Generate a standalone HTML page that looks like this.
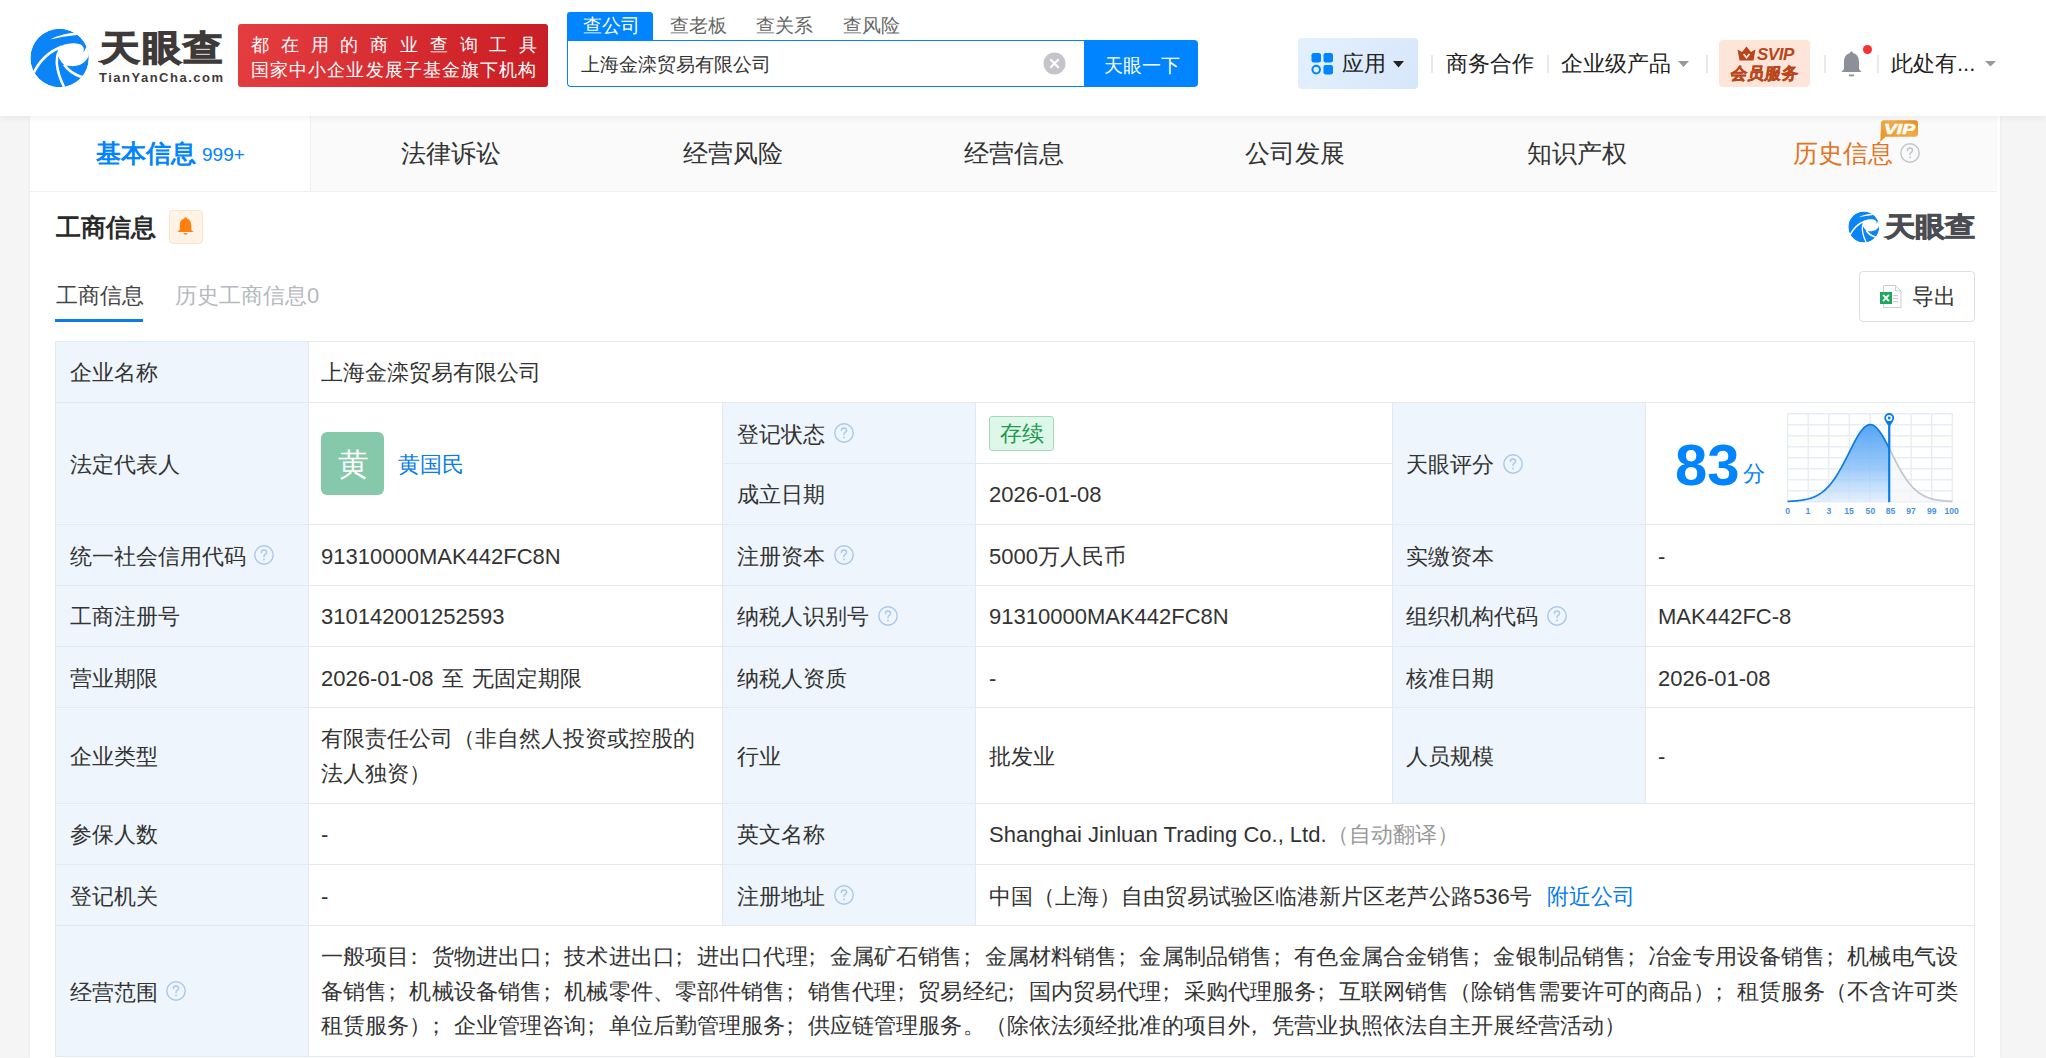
<!DOCTYPE html>
<html><head><meta charset="utf-8">
<style>
*{box-sizing:border-box;margin:0;padding:0}
html,body{width:2046px;height:1058px;overflow:hidden;background:#f5f5f5;font-family:"Liberation Sans",sans-serif;color:#333}
.abs{position:absolute}
.t{position:absolute;white-space:nowrap;line-height:1}
.c{}
.pl{position:relative;left:-.3em}
.pr{position:relative;left:.22em}
.pl2{position:relative;left:-.22em}
#hdr{position:absolute;left:0;top:0;width:2046px;height:116px;background:#fff;box-shadow:0 2px 7px rgba(0,0,0,.06);z-index:2}
.ln{position:absolute;background:#e3eaf2}
.lb{position:absolute;background:#eef5fc}
</style></head><body>

<div id="hdr">
<svg viewBox="0 0 68 68" width="68" height="68" style="position:absolute;left:26px;top:24px">
<defs><clipPath id="cca"><circle cx="33.6" cy="34" r="29.2"/></clipPath></defs>
<g clip-path="url(#cca)">
<circle cx="33.6" cy="34" r="29.2" fill="#0a84f6"/>
<path d="M34.7 22.2 C37 21 39 20.2 41.1 19.9 C44 19.4 46.5 19.2 48.8 19.3 C51 19.5 53 20 54.6 20.6 C56.3 21.6 57.5 22.8 57.8 24.4 C58.1 26 57.6 27.5 56.9 28.6 C58.3 27.2 59.6 25 60.6 22 L68 18 L68 36 L62.9 31.3 C61.5 35 59 38 55.9 39.8 C53.5 41.2 51 41.9 48.8 42.1 C46 42.3 44 42.1 41.8 41.8 C40.5 41.6 39.5 41.4 38.6 41.1 C36.5 39.5 34.5 37 33.4 34.7 C32.6 33 32 31.5 31.8 30 C32.2 27 33.2 24 34.7 22.2 Z" fill="#fff"/>
<path d="M7.2 50 C13 37.5 23 27.5 36.2 22.6" stroke="#fff" stroke-width="2.7" fill="none"/>
<path d="M35.2 23 C31.2 29 30.3 35 31 41 C31.8 48 34.5 56 38.3 63.5" stroke="#fff" stroke-width="2.5" fill="none"/>
<path d="M38.2 40.6 C41.5 46 47.5 50.5 56.5 53.3" stroke="#fff" stroke-width="2.8" fill="none"/>
<path d="M24 15.6 Q35.5 9.4 51 8.6 L51 11.1 Q37 12.4 24 15.6Z" fill="#fff"/>
</g></svg>
<div class="t" style="left:100px;top:25px;font-size:41px;font-weight:bold;color:#3f3a3a;-webkit-text-stroke:1.4px #3f3a3a;letter-spacing:1.5px;transform:scale(0.98,0.86);transform-origin:0 100%">天眼查</div>
<div class="t" style="left:99px;top:71px;font-size:13px;font-weight:bold;color:#3f3a3a;letter-spacing:1.5px">TianYanCha.com</div>
<div class="abs" style="left:238px;top:24px;width:310px;height:63px;border-radius:3px;background:linear-gradient(100deg,#e43d40 0%,#d42a2f 60%,#c71d24 100%)"></div>
<div class="t" style="left:251px;top:36px;font-size:18px;color:#fff;letter-spacing:11.8px">都在用的商业查询工具</div>
<div class="t" style="left:251px;top:61px;font-size:18px;color:#fff;letter-spacing:1.1px">国家中小企业发展子基金旗下机构</div>
<div class="abs" style="left:567px;top:12px;width:86px;height:29px;border-radius:3px 3px 0 0;background:#0084ff"></div>
<div class="t" style="left:583px;top:17px;font-size:18.5px;color:#fff;"><span class="c">查公司</span></div>
<div class="t" style="left:670px;top:17px;font-size:18.5px;color:#666;"><span class="c">查老板</span></div>
<div class="t" style="left:756px;top:17px;font-size:18.5px;color:#666;"><span class="c">查关系</span></div>
<div class="t" style="left:843px;top:17px;font-size:18.5px;color:#666;"><span class="c">查风险</span></div>
<div class="abs" style="left:567px;top:40px;width:530px;height:47px;border:1px solid #0084ff;border-right:none;border-radius:0 0 0 4px;background:#fff"></div>
<div class="t" style="left:581px;top:56px;font-size:18.6px;color:#333;"><span class="c">上海金滦贸易有限公司</span></div>
<svg class="abs" style="left:1043px;top:52px" width="23" height="23" viewBox="0 0 23 23"><circle cx="11.5" cy="11.5" r="11" fill="#c3c5cb"/><path d="M7.3 7.3 L15.7 15.7 M15.7 7.3 L7.3 15.7" stroke="#fff" stroke-width="2.2"/></svg>
<div class="abs" style="left:1084px;top:40px;width:114px;height:47px;border-radius:0 4px 4px 0;background:#0084ff"></div>
<div class="t" style="left:1104px;top:57px;font-size:18.5px;color:#fff;"><span class="c">天眼一下</span></div>
<div class="abs" style="left:1298px;top:38px;width:120px;height:51px;border-radius:4px;background:linear-gradient(120deg,#e3f0fe 0%,#dcebfc 60%,#d6e6fa 100%)"></div>
<svg class="abs" style="left:1311px;top:53px" width="23" height="22" viewBox="0 0 23 22"><rect x="0.5" y="0" width="9.5" height="9.5" rx="2.2" fill="#0084ff"/><rect x="12.5" y="0" width="9.5" height="9.5" rx="2.2" fill="#0084ff"/><circle cx="5.2" cy="16.6" r="3.8" fill="none" stroke="#0084ff" stroke-width="2"/><rect x="12.5" y="12" width="9.5" height="9.5" rx="2.2" fill="#0084ff"/></svg>
<div class="t" style="left:1342px;top:53px;font-size:22px;color:#222;"><span class="c">应用</span></div>
<svg class="abs" style="left:1393px;top:61px" width="11" height="7" viewBox="0 0 11 7"><path d="M0 0 L11 0 L5.5 6.5Z" fill="#222"/></svg>
<div class="abs" style="left:1431px;top:55px;width:2px;height:18px;background:#e8e9ee"></div>
<div class="abs" style="left:1547px;top:55px;width:2px;height:18px;background:#e8e9ee"></div>
<div class="abs" style="left:1706px;top:55px;width:2px;height:18px;background:#e8e9ee"></div>
<div class="abs" style="left:1824px;top:55px;width:2px;height:18px;background:#e8e9ee"></div>
<div class="abs" style="left:1877px;top:55px;width:2px;height:18px;background:#e8e9ee"></div>
<div class="t" style="left:1446px;top:53px;font-size:22px;color:#222;"><span class="c">商务合作</span></div>
<div class="t" style="left:1561px;top:53px;font-size:22px;color:#222;"><span class="c">企业级产品</span></div>
<svg class="abs" style="left:1678px;top:61px" width="11" height="7" viewBox="0 0 11 7"><path d="M0 0 L11 0 L5.5 6Z" fill="#999"/></svg>
<div class="abs" style="left:1719px;top:40px;width:91px;height:47px;border-radius:4px;background:#fde5da"></div>
<svg class="abs" style="left:1737px;top:46px" width="19" height="15" viewBox="0 0 19 15"><path d="M0.5 3.5 L5 6 L9.5 0.5 L14 6 L18.5 3.5 L16.5 14.5 L2.5 14.5 Z" fill="#b9461a"/><path d="M6.5 8 L9.5 11.5 L12.5 8" fill="none" stroke="#fde5da" stroke-width="1.8"/></svg>
<div class="t" style="left:1757px;top:46px;font-size:17px;font-weight:bold;font-style:italic;color:#b9461a;letter-spacing:-0.5px">SVIP</div>
<div class="t" style="left:1731px;top:65px;font-size:16.5px;font-weight:bold;color:#b9461a;-webkit-text-stroke:0.4px #b9461a;transform:skewX(-8deg)">会员服务</div>
<svg class="abs" style="left:1840px;top:50px" width="23" height="27" viewBox="0 0 23 27"><circle cx="11.5" cy="3" r="1.6" fill="#8e9099"/><path d="M11.5 3 C6 3 4 7.5 4 12 L4 19 L1.5 22 L21.5 22 L19 19 L19 12 C19 7.5 17 3 11.5 3Z" fill="#8e9099"/><rect x="9" y="24.5" width="5" height="1.8" fill="#8e9099"/></svg>
<div class="abs" style="left:1863px;top:45px;width:9px;height:9px;border-radius:50%;background:#f2332f"></div>
<div class="t" style="left:1891px;top:53px;font-size:22px;color:#222;"><span class="c">此处有</span>...</div>
<svg class="abs" style="left:1985px;top:61px" width="11" height="6" viewBox="0 0 11 6"><path d="M0 0 L11 0 L5.5 5.5Z" fill="#999"/></svg>
</div>
<div class="abs" style="left:30px;top:116px;width:1970px;height:942px;background:#fff;box-shadow:0 0 3px rgba(0,0,0,.06)"></div>
<div class="abs" style="left:310px;top:116px;width:1687px;height:75px;background:#fafafa"></div>
<div class="abs" style="left:30px;top:191px;width:1967px;height:1px;background:#efefef"></div>
<div class="abs" style="left:310px;top:116px;width:1px;height:75px;background:#f0f0f0"></div>
<div class="t" style="left:96px;top:141px;font-size:25px;color:#0084ff;font-weight:bold"><span class="c">基本信息</span></div>
<div class="t" style="left:202px;top:145px;font-size:19px;color:#0084ff">999+</div>
<div class="t" style="left:401px;top:141px;font-size:25px;color:#333;"><span class="c">法律诉讼</span></div>
<div class="t" style="left:683px;top:141px;font-size:25px;color:#333;"><span class="c">经营风险</span></div>
<div class="t" style="left:964px;top:141px;font-size:25px;color:#333;"><span class="c">经营信息</span></div>
<div class="t" style="left:1245px;top:141px;font-size:25px;color:#333;"><span class="c">公司发展</span></div>
<div class="t" style="left:1527px;top:141px;font-size:25px;color:#333;"><span class="c">知识产权</span></div>
<div class="t" style="left:1793px;top:141px;font-size:25px;color:#e4731e;"><span class="c">历史信息</span></div>
<svg class="abs" style="left:1900px;top:143px" width="20" height="20" viewBox="0 0 20 20"><circle cx="10" cy="10" r="9.2" fill="none" stroke="#c0c4cc" stroke-width="1.4"/><path d="M7.4 7.6 C7.4 5.9 8.6 5 10 5 C11.5 5 12.6 6 12.6 7.3 C12.6 8.6 11.6 9.1 10.8 9.7 C10.2 10.1 10 10.6 10 11.6" fill="none" stroke="#c0c4cc" stroke-width="1.4" stroke-linecap="round"/><circle cx="10" cy="14.4" r="0.95" fill="#c0c4cc"/></svg>
<svg class="abs" style="left:1880px;top:120px" width="39" height="23" viewBox="0 0 39 23"><defs><linearGradient id="vg" x1="0" y1="1" x2="1" y2="0"><stop offset="0" stop-color="#e6921f"/><stop offset="0.6" stop-color="#efab4e"/><stop offset="1" stop-color="#e8901c"/></linearGradient></defs><path d="M4 0.3 L35 0.3 Q38 0.3 38 3.3 L38 13.5 Q38 16.8 35 16.8 L5.5 16.8 L0.3 21.8 L1 3.3 Q1 0.3 4 0.3Z" fill="url(#vg)"/><text x="4" y="14" textLength="31" lengthAdjust="spacingAndGlyphs" font-family="Liberation Sans" font-weight="bold" font-style="italic" font-size="15" fill="#fffdf2" stroke="#fffdf2" stroke-width="0.6">VIP</text></svg>
<div class="t" style="left:56px;top:215px;font-size:25px;color:#2a2a2a;font-weight:bold"><span class="c">工商信息</span></div>
<div class="abs" style="left:169px;top:210px;width:34px;height:34px;border-radius:4px;background:#fff3e6;border:1px solid #fde3c8"></div>
<svg class="abs" style="left:177px;top:217px" width="17" height="19" viewBox="0 0 17 19"><circle cx="8.5" cy="1.8" r="1.5" fill="#ff7f0f"/><path d="M8.5 1.5 C4.5 1.5 2.8 4.8 2.8 8 L2.8 12.8 L0.5 15 L16.5 15 L14.2 12.8 L14.2 8 C14.2 4.8 12.5 1.5 8.5 1.5Z" fill="#ff7f0f"/><path d="M6 16 Q8.5 19.5 11 16Z" fill="#ff7f0f"/></svg>
<svg viewBox="0 0 68 68" width="36" height="36" style="position:absolute;left:1846px;top:209px">
<defs><clipPath id="ccb"><circle cx="33.6" cy="34" r="29.2"/></clipPath></defs>
<g clip-path="url(#ccb)">
<circle cx="33.6" cy="34" r="29.2" fill="#0a84f6"/>
<path d="M34.7 22.2 C37 21 39 20.2 41.1 19.9 C44 19.4 46.5 19.2 48.8 19.3 C51 19.5 53 20 54.6 20.6 C56.3 21.6 57.5 22.8 57.8 24.4 C58.1 26 57.6 27.5 56.9 28.6 C58.3 27.2 59.6 25 60.6 22 L68 18 L68 36 L62.9 31.3 C61.5 35 59 38 55.9 39.8 C53.5 41.2 51 41.9 48.8 42.1 C46 42.3 44 42.1 41.8 41.8 C40.5 41.6 39.5 41.4 38.6 41.1 C36.5 39.5 34.5 37 33.4 34.7 C32.6 33 32 31.5 31.8 30 C32.2 27 33.2 24 34.7 22.2 Z" fill="#fff"/>
<path d="M7.2 50 C13 37.5 23 27.5 36.2 22.6" stroke="#fff" stroke-width="2.7" fill="none"/>
<path d="M35.2 23 C31.2 29 30.3 35 31 41 C31.8 48 34.5 56 38.3 63.5" stroke="#fff" stroke-width="2.5" fill="none"/>
<path d="M38.2 40.6 C41.5 46 47.5 50.5 56.5 53.3" stroke="#fff" stroke-width="2.8" fill="none"/>
<path d="M24 15.6 Q35.5 9.4 51 8.6 L51 11.1 Q37 12.4 24 15.6Z" fill="#fff"/>
</g></svg>
<div class="t" style="left:1885px;top:209px;font-size:31px;font-weight:bold;color:#4a4c52;-webkit-text-stroke:1px #4a4c52;transform:scale(0.97,0.86);transform-origin:0 100%">天眼查</div>
<div class="t" style="left:56px;top:285px;font-size:22px;color:#444;"><span class="c">工商信息</span></div>
<div class="abs" style="left:55px;top:319px;width:88px;height:3px;background:#0a7ce6"></div>
<div class="t" style="left:175px;top:285px;font-size:22px;color:#b5b9c0;"><span class="c">历史工商信息</span>0</div>
<div class="abs" style="left:1859px;top:271px;width:116px;height:51px;border-radius:4px;border:1px solid #dcdfe6;background:#fff"></div>
<svg class="abs" style="left:1880px;top:285px" width="22" height="23" viewBox="0 0 22 23"><path d="M3.5 0.5 L15.5 0.5 L21 6 L21 22.5 L3.5 22.5Z" fill="#fff" stroke="#c9ccd3" stroke-width="1"/><path d="M15.5 0.5 L15.5 6 L21 6" fill="none" stroke="#c9ccd3" stroke-width="1"/><rect x="13" y="10" width="5" height="1.2" fill="#c9ccd3"/><rect x="13" y="13" width="5" height="1.2" fill="#c9ccd3"/><rect x="13" y="16" width="5" height="1.2" fill="#c9ccd3"/><rect x="0" y="7" width="12" height="12" fill="#1fa660"/><path d="M3 9.8 L9 16.2 M9 9.8 L3 16.2" stroke="#fff" stroke-width="1.8"/></svg>
<div class="t" style="left:1912px;top:286px;font-size:22px;color:#333;"><span class="c">导出</span></div>
<div class="abs" style="left:55px;top:341px;width:1920px;height:715px;background:#fff"></div>
<div class="lb" style="left:55px;top:341px;width:253px;height:715px"></div>
<div class="lb" style="left:722px;top:402px;width:253px;height:523px"></div>
<div class="lb" style="left:1392px;top:402px;width:253px;height:401px"></div>
<div class="ln" style="left:55px;top:341px;width:1920px;height:1px"></div>
<div class="ln" style="left:55px;top:402px;width:1920px;height:1px"></div>
<div class="ln" style="left:55px;top:524px;width:1920px;height:1px"></div>
<div class="ln" style="left:55px;top:585px;width:1920px;height:1px"></div>
<div class="ln" style="left:55px;top:646px;width:1920px;height:1px"></div>
<div class="ln" style="left:55px;top:707px;width:1920px;height:1px"></div>
<div class="ln" style="left:55px;top:803px;width:1920px;height:1px"></div>
<div class="ln" style="left:55px;top:864px;width:1920px;height:1px"></div>
<div class="ln" style="left:55px;top:925px;width:1920px;height:1px"></div>
<div class="ln" style="left:55px;top:1056px;width:1920px;height:1px"></div>
<div class="ln" style="left:722px;top:463px;width:670px;height:1px"></div>
<div class="ln" style="left:55px;top:341px;width:1px;height:715px"></div>
<div class="ln" style="left:1974px;top:341px;width:1px;height:715px"></div>
<div class="ln" style="left:308px;top:341px;width:1px;height:715px"></div>
<div class="ln" style="left:722px;top:402px;width:1px;height:523px"></div>
<div class="ln" style="left:975px;top:402px;width:1px;height:523px"></div>
<div class="ln" style="left:1392px;top:402px;width:1px;height:401px"></div>
<div class="ln" style="left:1645px;top:402px;width:1px;height:401px"></div>
<div class="t" style="left:70px;top:362px;font-size:22px;color:#333;"><span class="c">企业名称</span></div>
<div class="t" style="left:321px;top:362px;font-size:22px;color:#333;"><span class="c">上海金滦贸易有限公司</span></div>
<div class="t" style="left:70px;top:454px;font-size:22px;color:#333;"><span class="c">法定代表人</span></div>
<div class="abs" style="left:321px;top:432px;width:63px;height:63px;border-radius:6px;background:#86c8aa"></div>
<div class="t" style="left:338px;top:449px;font-size:31px;color:#fff;"><span class="c">黄</span></div>
<div class="t" style="left:398px;top:454px;font-size:22px;color:#0a7ce6;"><span class="c">黄国民</span></div>
<div class="t" style="left:737px;top:424px;font-size:22px;color:#333;"><span class="c">登记状态</span></div>
<svg class="abs" style="left:834px;top:423px" width="20" height="20" viewBox="0 0 20 20"><circle cx="10" cy="10" r="9.2" fill="none" stroke="#a9c9ea" stroke-width="1.4"/><path d="M7.4 7.6 C7.4 5.9 8.6 5 10 5 C11.5 5 12.6 6 12.6 7.3 C12.6 8.6 11.6 9.1 10.8 9.7 C10.2 10.1 10 10.6 10 11.6" fill="none" stroke="#a9c9ea" stroke-width="1.4" stroke-linecap="round"/><circle cx="10" cy="14.4" r="0.95" fill="#a9c9ea"/></svg>
<div class="abs" style="left:989px;top:416px;width:65px;height:35px;border-radius:3px;background:#ddf8e8;border:1px solid #a8d8ba"></div>
<div class="t" style="left:1000px;top:423px;font-size:22px;color:#1f9a4f;"><span class="c">存续</span></div>
<div class="t" style="left:737px;top:484px;font-size:22px;color:#333;"><span class="c">成立日期</span></div>
<div class="t" style="left:989px;top:484px;font-size:22px;color:#333;">2026-01-08</div>
<div class="t" style="left:1406px;top:454px;font-size:22px;color:#333;"><span class="c">天眼评分</span></div>
<svg class="abs" style="left:1503px;top:454px" width="20" height="20" viewBox="0 0 20 20"><circle cx="10" cy="10" r="9.2" fill="none" stroke="#a9c9ea" stroke-width="1.4"/><path d="M7.4 7.6 C7.4 5.9 8.6 5 10 5 C11.5 5 12.6 6 12.6 7.3 C12.6 8.6 11.6 9.1 10.8 9.7 C10.2 10.1 10 10.6 10 11.6" fill="none" stroke="#a9c9ea" stroke-width="1.4" stroke-linecap="round"/><circle cx="10" cy="14.4" r="0.95" fill="#a9c9ea"/></svg>
<div class="t" style="left:1675px;top:436px;font-size:58px;font-weight:bold;color:#0084ff;letter-spacing:0px">83</div>
<div class="t" style="left:1743px;top:463px;font-size:22px;color:#0084ff;"><span class="c">分</span></div>
<svg class="abs" style="left:1780px;top:405px" width="185" height="115" viewBox="0 0 185 115"><defs><linearGradient id="cg" x1="0" y1="0" x2="0" y2="1"><stop offset="0" stop-color="#4c9ff6" stop-opacity="0.95"/><stop offset="0.55" stop-color="#80bbf8" stop-opacity="0.8"/><stop offset="1" stop-color="#d8e9fc" stop-opacity="0.7"/></linearGradient></defs><line x1="7.60" y1="8.70" x2="7.60" y2="96.70" stroke="#e7edf5" stroke-width="1.4"/><line x1="28.19" y1="8.70" x2="28.19" y2="96.70" stroke="#e7edf5" stroke-width="1.4"/><line x1="48.77" y1="8.70" x2="48.77" y2="96.70" stroke="#e7edf5" stroke-width="1.4"/><line x1="69.36" y1="8.70" x2="69.36" y2="96.70" stroke="#e7edf5" stroke-width="1.4"/><line x1="89.95" y1="8.70" x2="89.95" y2="96.70" stroke="#e7edf5" stroke-width="1.4"/><line x1="110.54" y1="8.70" x2="110.54" y2="96.70" stroke="#e7edf5" stroke-width="1.4"/><line x1="131.12" y1="8.70" x2="131.12" y2="96.70" stroke="#e7edf5" stroke-width="1.4"/><line x1="151.71" y1="8.70" x2="151.71" y2="96.70" stroke="#e7edf5" stroke-width="1.4"/><line x1="172.30" y1="8.70" x2="172.30" y2="96.70" stroke="#e7edf5" stroke-width="1.4"/><line x1="7.60" y1="8.70" x2="172.30" y2="8.70" stroke="#e7edf5" stroke-width="1.4"/><line x1="7.60" y1="19.70" x2="172.30" y2="19.70" stroke="#e7edf5" stroke-width="1.4"/><line x1="7.60" y1="30.70" x2="172.30" y2="30.70" stroke="#e7edf5" stroke-width="1.4"/><line x1="7.60" y1="41.70" x2="172.30" y2="41.70" stroke="#e7edf5" stroke-width="1.4"/><line x1="7.60" y1="52.70" x2="172.30" y2="52.70" stroke="#e7edf5" stroke-width="1.4"/><line x1="7.60" y1="63.70" x2="172.30" y2="63.70" stroke="#e7edf5" stroke-width="1.4"/><line x1="7.60" y1="74.70" x2="172.30" y2="74.70" stroke="#e7edf5" stroke-width="1.4"/><line x1="7.60" y1="85.70" x2="172.30" y2="85.70" stroke="#e7edf5" stroke-width="1.4"/><line x1="7.60" y1="96.70" x2="172.30" y2="96.70" stroke="#e7edf5" stroke-width="1.4"/><polygon points="109.20,43.32 110.20,45.32 111.20,47.32 112.20,49.33 113.20,51.33 114.20,53.32 115.20,55.28 116.20,57.23 117.20,59.14 118.20,61.01 119.20,62.84 120.20,64.63 121.20,66.37 122.20,68.05 123.20,69.69 124.20,71.26 125.20,72.78 126.20,74.24 127.20,75.64 128.20,76.98 129.20,78.26 130.20,79.48 131.20,80.64 132.20,81.75 133.20,82.79 134.20,83.78 135.20,84.71 136.20,85.59 137.20,86.42 138.20,87.19 139.20,87.92 140.20,88.61 141.20,89.24 142.20,89.84 143.20,90.39 144.20,90.91 145.20,91.39 146.20,91.84 147.20,92.25 148.20,92.63 149.20,92.99 150.20,93.31 151.20,93.61 152.20,93.89 153.20,94.14 154.20,94.38 155.20,94.59 156.20,94.79 157.20,94.97 158.20,95.13 159.20,95.28 160.20,95.42 161.20,95.54 162.20,95.66 163.20,95.76 164.20,95.85 165.20,95.94 166.20,96.02 167.20,96.09 168.20,96.15 169.20,96.21 170.20,96.26 171.20,96.30 172.20,96.35 172.30,96.35 172.30,96.70 109.20,96.70" fill="#f4f5f7" fill-opacity="0.75"/><polyline points="109.20,43.32 110.20,45.32 111.20,47.32 112.20,49.33 113.20,51.33 114.20,53.32 115.20,55.28 116.20,57.23 117.20,59.14 118.20,61.01 119.20,62.84 120.20,64.63 121.20,66.37 122.20,68.05 123.20,69.69 124.20,71.26 125.20,72.78 126.20,74.24 127.20,75.64 128.20,76.98 129.20,78.26 130.20,79.48 131.20,80.64 132.20,81.75 133.20,82.79 134.20,83.78 135.20,84.71 136.20,85.59 137.20,86.42 138.20,87.19 139.20,87.92 140.20,88.61 141.20,89.24 142.20,89.84 143.20,90.39 144.20,90.91 145.20,91.39 146.20,91.84 147.20,92.25 148.20,92.63 149.20,92.99 150.20,93.31 151.20,93.61 152.20,93.89 153.20,94.14 154.20,94.38 155.20,94.59 156.20,94.79 157.20,94.97 158.20,95.13 159.20,95.28 160.20,95.42 161.20,95.54 162.20,95.66 163.20,95.76 164.20,95.85 165.20,95.94 166.20,96.02 167.20,96.09 168.20,96.15 169.20,96.21 170.20,96.26 171.20,96.30 172.20,96.35 172.30,96.35" fill="none" stroke="#c3c9d2" stroke-width="1.8"/><polygon points="7.60,96.70 7.60,96.37 8.60,96.33 9.60,96.29 10.60,96.24 11.60,96.18 12.60,96.13 13.60,96.06 14.60,95.99 15.60,95.91 16.60,95.82 17.60,95.72 18.60,95.61 19.60,95.50 20.60,95.37 21.60,95.22 22.60,95.07 23.60,94.90 24.60,94.71 25.60,94.51 26.60,94.29 27.60,94.05 28.60,93.78 29.60,93.50 30.60,93.19 31.60,92.85 32.60,92.48 33.60,92.09 34.60,91.66 35.60,91.20 36.60,90.71 37.60,90.18 38.60,89.61 39.60,88.99 40.60,88.34 41.60,87.64 42.60,86.89 43.60,86.09 44.60,85.24 45.60,84.34 46.60,83.39 47.60,82.38 48.60,81.31 49.60,80.19 50.60,79.00 51.60,77.76 52.60,76.45 53.60,75.09 54.60,73.67 55.60,72.18 56.60,70.64 57.60,69.04 58.60,67.39 59.60,65.68 60.60,63.92 61.60,62.11 62.60,60.26 63.60,58.38 64.60,56.45 65.60,54.50 66.60,52.52 67.60,50.53 68.60,48.53 69.60,46.52 70.60,44.52 71.60,42.53 72.60,40.56 73.60,38.63 74.60,36.74 75.60,34.89 76.60,33.11 77.60,31.39 78.60,29.76 79.60,28.21 80.60,26.77 81.60,25.43 82.60,24.21 83.60,23.12 84.60,22.16 85.60,21.34 86.60,20.68 87.60,20.17 88.60,19.82 89.60,19.63 90.60,19.61 91.60,19.77 92.60,20.08 93.60,20.56 94.60,21.20 95.60,21.98 96.60,22.91 97.60,23.98 98.60,25.18 99.60,26.49 100.60,27.92 101.60,29.44 102.60,31.06 103.60,32.76 104.60,34.53 105.60,36.36 106.60,38.25 107.60,40.18 108.60,42.14 109.20,43.32 109.20,96.70" fill="url(#cg)"/><polyline points="7.60,96.37 8.60,96.33 9.60,96.29 10.60,96.24 11.60,96.18 12.60,96.13 13.60,96.06 14.60,95.99 15.60,95.91 16.60,95.82 17.60,95.72 18.60,95.61 19.60,95.50 20.60,95.37 21.60,95.22 22.60,95.07 23.60,94.90 24.60,94.71 25.60,94.51 26.60,94.29 27.60,94.05 28.60,93.78 29.60,93.50 30.60,93.19 31.60,92.85 32.60,92.48 33.60,92.09 34.60,91.66 35.60,91.20 36.60,90.71 37.60,90.18 38.60,89.61 39.60,88.99 40.60,88.34 41.60,87.64 42.60,86.89 43.60,86.09 44.60,85.24 45.60,84.34 46.60,83.39 47.60,82.38 48.60,81.31 49.60,80.19 50.60,79.00 51.60,77.76 52.60,76.45 53.60,75.09 54.60,73.67 55.60,72.18 56.60,70.64 57.60,69.04 58.60,67.39 59.60,65.68 60.60,63.92 61.60,62.11 62.60,60.26 63.60,58.38 64.60,56.45 65.60,54.50 66.60,52.52 67.60,50.53 68.60,48.53 69.60,46.52 70.60,44.52 71.60,42.53 72.60,40.56 73.60,38.63 74.60,36.74 75.60,34.89 76.60,33.11 77.60,31.39 78.60,29.76 79.60,28.21 80.60,26.77 81.60,25.43 82.60,24.21 83.60,23.12 84.60,22.16 85.60,21.34 86.60,20.68 87.60,20.17 88.60,19.82 89.60,19.63 90.60,19.61 91.60,19.77 92.60,20.08 93.60,20.56 94.60,21.20 95.60,21.98 96.60,22.91 97.60,23.98 98.60,25.18 99.60,26.49 100.60,27.92 101.60,29.44 102.60,31.06 103.60,32.76 104.60,34.53 105.60,36.36 106.60,38.25 107.60,40.18 108.60,42.14 109.20,43.32" fill="none" stroke="#0a7ce6" stroke-width="1.7"/><line x1="109.20" y1="97.20" x2="109.20" y2="17" stroke="#0a7ce6" stroke-width="2.2"/><path d="M104.30 13.00 A4.9 4.9 0 1 1 114.10 13.00 Q113.80 16.20 109.20 21.80 Q104.60 16.20 104.30 13.00Z" fill="#0a7ce6"/><circle cx="109.20" cy="13.00" r="3.1" fill="#fff"/><circle cx="109.20" cy="13.00" r="1.4" fill="#0a7ce6"/><text x="7.60" y="108.70" text-anchor="middle" font-family="Liberation Sans" font-weight="bold" font-size="8.6" fill="#4792e4">0</text><text x="28.00" y="108.70" text-anchor="middle" font-family="Liberation Sans" font-weight="bold" font-size="8.6" fill="#4792e4">1</text><text x="49.00" y="108.70" text-anchor="middle" font-family="Liberation Sans" font-weight="bold" font-size="8.6" fill="#4792e4">3</text><text x="69.00" y="108.70" text-anchor="middle" font-family="Liberation Sans" font-weight="bold" font-size="8.6" fill="#4792e4">15</text><text x="90.40" y="108.70" text-anchor="middle" font-family="Liberation Sans" font-weight="bold" font-size="8.6" fill="#4792e4">50</text><text x="110.60" y="108.70" text-anchor="middle" font-family="Liberation Sans" font-weight="bold" font-size="8.6" fill="#4792e4">85</text><text x="131.00" y="108.70" text-anchor="middle" font-family="Liberation Sans" font-weight="bold" font-size="8.6" fill="#4792e4">97</text><text x="151.80" y="108.70" text-anchor="middle" font-family="Liberation Sans" font-weight="bold" font-size="8.6" fill="#4792e4">99</text><text x="171.70" y="108.70" text-anchor="middle" font-family="Liberation Sans" font-weight="bold" font-size="8.6" fill="#4792e4">100</text></svg>
<div class="t" style="left:70px;top:546px;font-size:22px;color:#333;"><span class="c">统一社会信用代码</span></div>
<svg class="abs" style="left:254px;top:545px" width="20" height="20" viewBox="0 0 20 20"><circle cx="10" cy="10" r="9.2" fill="none" stroke="#a9c9ea" stroke-width="1.4"/><path d="M7.4 7.6 C7.4 5.9 8.6 5 10 5 C11.5 5 12.6 6 12.6 7.3 C12.6 8.6 11.6 9.1 10.8 9.7 C10.2 10.1 10 10.6 10 11.6" fill="none" stroke="#a9c9ea" stroke-width="1.4" stroke-linecap="round"/><circle cx="10" cy="14.4" r="0.95" fill="#a9c9ea"/></svg>
<div class="t" style="left:321px;top:546px;font-size:22px;color:#333;">91310000MAK442FC8N</div>
<div class="t" style="left:737px;top:546px;font-size:22px;color:#333;"><span class="c">注册资本</span></div>
<svg class="abs" style="left:834px;top:545px" width="20" height="20" viewBox="0 0 20 20"><circle cx="10" cy="10" r="9.2" fill="none" stroke="#a9c9ea" stroke-width="1.4"/><path d="M7.4 7.6 C7.4 5.9 8.6 5 10 5 C11.5 5 12.6 6 12.6 7.3 C12.6 8.6 11.6 9.1 10.8 9.7 C10.2 10.1 10 10.6 10 11.6" fill="none" stroke="#a9c9ea" stroke-width="1.4" stroke-linecap="round"/><circle cx="10" cy="14.4" r="0.95" fill="#a9c9ea"/></svg>
<div class="t" style="left:989px;top:546px;font-size:22px;color:#333;">5000<span class="c">万人民币</span></div>
<div class="t" style="left:1406px;top:546px;font-size:22px;color:#333;"><span class="c">实缴资本</span></div>
<div class="t" style="left:1658px;top:546px;font-size:22px;color:#333;">-</div>
<div class="t" style="left:70px;top:606px;font-size:22px;color:#333;"><span class="c">工商注册号</span></div>
<div class="t" style="left:321px;top:606px;font-size:22px;color:#333;">310142001252593</div>
<div class="t" style="left:737px;top:606px;font-size:22px;color:#333;"><span class="c">纳税人识别号</span></div>
<svg class="abs" style="left:878px;top:606px" width="20" height="20" viewBox="0 0 20 20"><circle cx="10" cy="10" r="9.2" fill="none" stroke="#a9c9ea" stroke-width="1.4"/><path d="M7.4 7.6 C7.4 5.9 8.6 5 10 5 C11.5 5 12.6 6 12.6 7.3 C12.6 8.6 11.6 9.1 10.8 9.7 C10.2 10.1 10 10.6 10 11.6" fill="none" stroke="#a9c9ea" stroke-width="1.4" stroke-linecap="round"/><circle cx="10" cy="14.4" r="0.95" fill="#a9c9ea"/></svg>
<div class="t" style="left:989px;top:606px;font-size:22px;color:#333;">91310000MAK442FC8N</div>
<div class="t" style="left:1406px;top:606px;font-size:22px;color:#333;"><span class="c">组织机构代码</span></div>
<svg class="abs" style="left:1547px;top:606px" width="20" height="20" viewBox="0 0 20 20"><circle cx="10" cy="10" r="9.2" fill="none" stroke="#a9c9ea" stroke-width="1.4"/><path d="M7.4 7.6 C7.4 5.9 8.6 5 10 5 C11.5 5 12.6 6 12.6 7.3 C12.6 8.6 11.6 9.1 10.8 9.7 C10.2 10.1 10 10.6 10 11.6" fill="none" stroke="#a9c9ea" stroke-width="1.4" stroke-linecap="round"/><circle cx="10" cy="14.4" r="0.95" fill="#a9c9ea"/></svg>
<div class="t" style="left:1658px;top:606px;font-size:22px;color:#333;">MAK442FC-8</div>
<div class="t" style="left:70px;top:668px;font-size:22px;color:#333;"><span class="c">营业期限</span></div>
<div class="t" style="left:321px;top:668px;font-size:22px;color:#333;word-spacing:2px">2026-01-08 <span class="c">至</span> <span class="c">无固定期限</span></div>
<div class="t" style="left:737px;top:668px;font-size:22px;color:#333;"><span class="c">纳税人资质</span></div>
<div class="t" style="left:989px;top:668px;font-size:22px;color:#333;">-</div>
<div class="t" style="left:1406px;top:668px;font-size:22px;color:#333;"><span class="c">核准日期</span></div>
<div class="t" style="left:1658px;top:668px;font-size:22px;color:#333;">2026-01-08</div>
<div class="t" style="left:70px;top:746px;font-size:22px;color:#333;"><span class="c">企业类型</span></div>
<div class="t" style="left:321px;top:728px;font-size:22px;color:#333;"><span class="c">有限责任公司（非自然人投资或控股的</span></div>
<div class="t" style="left:321px;top:763px;font-size:22px;color:#333;"><span class="c">法人独资）</span></div>
<div class="t" style="left:737px;top:746px;font-size:22px;color:#333;"><span class="c">行业</span></div>
<div class="t" style="left:989px;top:746px;font-size:22px;color:#333;"><span class="c">批发业</span></div>
<div class="t" style="left:1406px;top:746px;font-size:22px;color:#333;"><span class="c">人员规模</span></div>
<div class="t" style="left:1658px;top:746px;font-size:22px;color:#333;">-</div>
<div class="t" style="left:70px;top:824px;font-size:22px;color:#333;"><span class="c">参保人数</span></div>
<div class="t" style="left:321px;top:824px;font-size:22px;color:#333;">-</div>
<div class="t" style="left:737px;top:824px;font-size:22px;color:#333;"><span class="c">英文名称</span></div>
<div class="t" style="left:989px;top:824px;font-size:22px;color:#333;">Shanghai Jinluan Trading Co., Ltd.<span style="color:#999"><span class="c">（自动翻译）</span></span></div>
<div class="t" style="left:70px;top:886px;font-size:22px;color:#333;"><span class="c">登记机关</span></div>
<div class="t" style="left:321px;top:886px;font-size:22px;color:#333;">-</div>
<div class="t" style="left:737px;top:886px;font-size:22px;color:#333;"><span class="c">注册地址</span></div>
<svg class="abs" style="left:834px;top:885px" width="20" height="20" viewBox="0 0 20 20"><circle cx="10" cy="10" r="9.2" fill="none" stroke="#a9c9ea" stroke-width="1.4"/><path d="M7.4 7.6 C7.4 5.9 8.6 5 10 5 C11.5 5 12.6 6 12.6 7.3 C12.6 8.6 11.6 9.1 10.8 9.7 C10.2 10.1 10 10.6 10 11.6" fill="none" stroke="#a9c9ea" stroke-width="1.4" stroke-linecap="round"/><circle cx="10" cy="14.4" r="0.95" fill="#a9c9ea"/></svg>
<div class="t" style="left:989px;top:886px;font-size:22px;color:#333;"><span class="c">中国（上海）自由贸易试验区临港新片区老芦公路</span>536<span class="c">号</span></div>
<div class="t" style="left:1547px;top:886px;font-size:22px;color:#0a7ce6;"><span class="c">附近公司</span></div>
<div class="t" style="left:70px;top:982px;font-size:22px;color:#333;"><span class="c">经营范围</span></div>
<svg class="abs" style="left:166px;top:981px" width="20" height="20" viewBox="0 0 20 20"><circle cx="10" cy="10" r="9.2" fill="none" stroke="#a9c9ea" stroke-width="1.4"/><path d="M7.4 7.6 C7.4 5.9 8.6 5 10 5 C11.5 5 12.6 6 12.6 7.3 C12.6 8.6 11.6 9.1 10.8 9.7 C10.2 10.1 10 10.6 10 11.6" fill="none" stroke="#a9c9ea" stroke-width="1.4" stroke-linecap="round"/><circle cx="10" cy="14.4" r="0.95" fill="#a9c9ea"/></svg>
<div class="t" style="left:321px;top:946px;font-size:22px;color:#333;transform:scaleX(1.0055);transform-origin:0 0"><span class="c">一般项目<span class="pl">：</span>货物进出口<span class="pl">；</span>技术进出口<span class="pl">；</span>进出口代理<span class="pl">；</span>金属矿石销售<span class="pl">；</span>金属材料销售<span class="pl">；</span>金属制品销售<span class="pl">；</span>有色金属合金销售<span class="pl">；</span>金银制品销售<span class="pl">；</span>冶金专用设备销售<span class="pl">；</span>机械电气设</span></div>
<div class="t" style="left:321px;top:981px;font-size:22px;color:#333;transform:scaleX(1.0055);transform-origin:0 0"><span class="c">备销售<span class="pl">；</span>机械设备销售<span class="pl">；</span>机械零件、零部件销售<span class="pl">；</span>销售代理<span class="pl">；</span>贸易经纪<span class="pl">；</span>国内贸易代理<span class="pl">；</span>采购代理服务<span class="pl">；</span>互联网销售（除销售需要许可的商品）<span class="pl">；</span>租赁服务（不含许可类</span></div>
<div class="t" style="left:321px;top:1015px;font-size:22px;color:#333;transform:scaleX(1.0055);transform-origin:0 0"><span class="c">租赁服务）<span class="pl">；</span>企业管理咨询<span class="pl">；</span>单位后勤管理服务<span class="pl">；</span>供应链管理服务。（除依法须经批准的项目外<span class="pl">，</span>凭营业执照依法自主开展经营活动）</span></div>
</body></html>
